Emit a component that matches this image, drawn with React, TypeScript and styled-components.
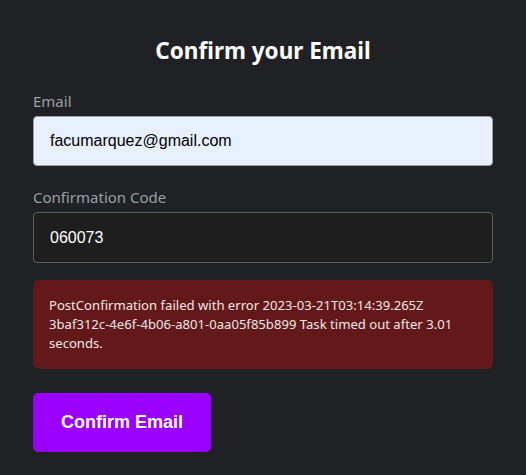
import React from "react";
import styled, { createGlobalStyle } from "styled-components";

const Global = createGlobalStyle`
  html, body { margin: 0; padding: 0; background: #202124; }
  body { font-family: "Noto Sans", "Open Sans", sans-serif; }
`;

const Page = styled.main`
  width: 460px;
  margin: 0 auto;
  padding-top: 36px;
  display: flex;
  flex-direction: column;
`;

const Title = styled.h1`
  margin: 0 0 25px;
  text-align: center;
  font-family: "Noto Sans", sans-serif;
  font-weight: 700;
  font-size: 22.5px;
  line-height: 30px;
  color: #ffffff;
`;

const Field = styled.div<{ $gap: number }>`
  display: flex;
  flex-direction: column;
  margin-bottom: ${(p) => p.$gap}px;
`;

const Label = styled.label`
  font-family: "Noto Sans", sans-serif;
  font-size: 15px;
  line-height: 20px;
  color: #9aa0a6;
  margin-bottom: 5px;
`;

const Input = styled.input<{ $filled?: boolean }>`
  box-sizing: border-box;
  height: ${(p) => (p.$filled ? "50px" : "51px")};
  padding: 0 16px;
  border-radius: 4px;
  border: 1px solid ${(p) => (p.$filled ? "#9aa0a6" : "#5f6063")};
  background: ${(p) => (p.$filled ? "#e8f0fe" : "#1e1e1f")};
  color: ${(p) => (p.$filled ? "#000000" : "#ffffff")};
  font-family: "Liberation Sans", Arial, sans-serif;
  font-size: 16px;
  outline: none;
`;

const ErrorBox = styled.div`
  box-sizing: border-box;
  padding: 16px 16px;
  background: #63181a;
  border-radius: 6px;
  color: #f2e6e6;
  font-family: "Noto Sans", sans-serif;
  font-size: 13.1px;
  line-height: 19px;
`;

const Button = styled.button`
  align-self: flex-start;
  margin-top: 24px;
  width: 178px;
  height: 59px;
  border: none;
  border-radius: 5px;
  background: #9900ff;
  color: #ffffff;
  font-family: "Liberation Sans", Arial, sans-serif;
  font-weight: 700;
  font-size: 18px;
  cursor: pointer;
`;

export default function App() {
  return (
    <>
      <Global />
      <Page>
        <Title>Confirm your Email</Title>
        <Field $gap={21}>
          <Label>Email</Label>
          <Input $filled defaultValue="facumarquez@gmail.com" />
        </Field>
        <Field $gap={17}>
          <Label>Confirmation Code</Label>
          <Input defaultValue="060073" />
        </Field>
        <ErrorBox>
          PostConfirmation failed with error 2023-03-21T03:14:39.265Z
          3baf312c-4e6f-4b06-a801-0aa05f85b899 Task timed out after 3.01
          seconds.
        </ErrorBox>
        <Button>Confirm Email</Button>
      </Page>
    </>
  );
}
